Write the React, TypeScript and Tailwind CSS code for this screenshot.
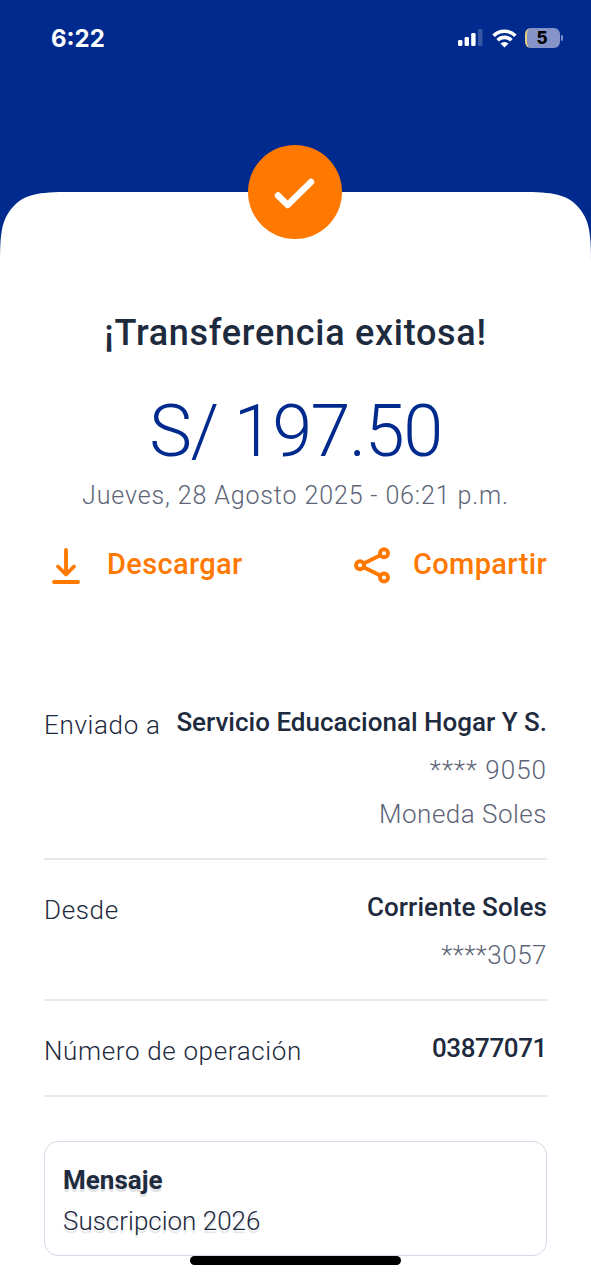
import type { ReactNode } from 'react';

interface DetailRowProps {
  label: string;
  children: ReactNode;
}

function SignalIcon() {
  return (
    <svg width="25" height="18" viewBox="0 0 25 18" fill="#fff">
      <rect x="0" y="11" width="4.4" height="6" rx="1.3" />
      <rect x="6.6" y="8" width="4.4" height="9" rx="1.3" />
      <rect x="13.2" y="4" width="4.4" height="13" rx="1.3" />
      <rect x="20" y="0" width="4.4" height="17" rx="1.3" opacity="0.22" />
    </svg>
  );
}

function WifiIcon() {
  return (
    <svg width="25" height="19" viewBox="0 0 25 19" fill="none" stroke="#fff" strokeWidth="3.6">
      <path d="M1.6 6.7a15.4 15.4 0 0 1 21.8 0" />
      <path d="M5.6 11.2a9.8 9.8 0 0 1 13.8 0" />
      <path d="M12.5 18.6 8.4 14.6a5.8 5.8 0 0 1 8.2 0z" fill="#fff" stroke="none" />
    </svg>
  );
}

function BatteryIcon() {
  return (
    <div className="flex items-center gap-px">
      <div className="flex h-5 w-[35px] items-center justify-center overflow-hidden rounded-[6px] border-l-2 border-[#e6cf7b] bg-[#8593c9] pr-[3px] font-['Inter',sans-serif] text-[17px] leading-none font-extrabold text-black">
        5
      </div>
      <div className="h-[6px] w-[2px] rounded-r-full bg-[#8593c9]" />
    </div>
  );
}

function DownloadIcon() {
  return (
    <svg className="mt-[3px]" width="28" height="36" viewBox="0 0 28 36" fill="none" stroke="#ff7800" strokeWidth="3.8" strokeLinecap="round" strokeLinejoin="round">
      <path d="M14 2v24M6 18.5l8 8 8-8M2 34h24" />
    </svg>
  );
}

function ShareIcon() {
  return (
    <svg className="mt-[3px]" width="37" height="37" viewBox="0 0 37 37" fill="none" stroke="#ff7800" strokeWidth="3.9">
      <circle cx="6" cy="18.3" r="4" />
      <circle cx="30" cy="6.3" r="4" />
      <circle cx="30" cy="30.5" r="4" />
      <path d="M9.7 16.5 26.3 8.2M9.7 20.2l16.6 8.4" />
    </svg>
  );
}

function DetailRow({ label, children }: DetailRowProps) {
  return (
    <div className="flex items-start justify-between border-b-2 border-[#e8e8ea]">
      <span className="mt-[3px] text-[26px] leading-10 font-light tracking-[0.65px] whitespace-nowrap text-[#1e2a3e]">
        {label}
      </span>
      <div className="flex flex-col items-end whitespace-nowrap">{children}</div>
    </div>
  );
}

export default function App() {
  return (
    <div className="relative h-[1280px] w-[591px] overflow-hidden bg-white font-['Roboto',sans-serif]">
      <header className="relative h-[192px] bg-[#002a8d]">
        <div className="flex items-start justify-between pt-7 pr-[28px] pl-[51px]">
          <span className="font-['Inter',sans-serif] text-[24px] leading-[21px] font-bold text-white">6:22</span>
          <div className="flex items-center gap-[8.5px]">
            <SignalIcon />
            <WifiIcon />
            <BatteryIcon />
          </div>
        </div>
        {/* Success badge, straddles the header edge */}
        <div className="absolute top-[145px] left-[248px] z-10 flex size-[94px] items-center justify-center rounded-full bg-[#ff7800] pt-[3px]">
          <svg width="42" height="34" viewBox="0 0 42 34" fill="none" stroke="#fff" strokeWidth="6.5" strokeLinecap="round" strokeLinejoin="round">
            <path d="M4 18.5 13.6 28 37 5" />
          </svg>
        </div>
      </header>

      {/* Curved top of the sheet */}
      <svg className="block bg-[#002a8d]" width="591" height="70" viewBox="0 0 591 70">
        <path fill="#fff" d="M0 70C0 40 2 28 12 16 24 2 38 0 70 0H521C553 0 567 2 579 16 589 28 591 40 591 70Z" />
      </svg>

      <main className="flex flex-col px-11 pt-[46px]">
        <h1 className="text-center text-[36px] leading-[50px] font-medium tracking-[0.72px] whitespace-nowrap text-[#1e2a3e]">
          ¡Transferencia exitosa!
        </h1>
        <p className="mt-[34px] text-center text-[72px] leading-[80px] font-[350] tracking-[-1.5px] whitespace-nowrap text-[#002a8d]">
          S/ 197.50
        </p>
        <p className="text-center text-[25px] leading-[48px] font-light tracking-[0.88px] whitespace-nowrap text-[#5c6478]">
          Jueves, 28 Agosto 2025 - 06:21 p.m.
        </p>

        <div className="mt-[24px] flex h-10 items-center justify-between text-[29px] leading-10 font-medium tracking-[0.35px] text-[#ff7800]">
          <button className="flex items-center gap-[27px] pl-2">
            <DownloadIcon />
            <span>Descargar</span>
          </button>
          <button className="flex items-center gap-[22px]">
            <ShareIcon />
            <span>Compartir</span>
          </button>
        </div>

        <section className="mt-[118px]">
          <DetailRow label="Enviado a">
            <span className="text-[26px] leading-10 font-medium text-[#1e2a3e]">Servicio Educacional Hogar Y S.</span>
            <span className="mt-2 text-[26px] leading-10 font-light tracking-[1px] text-[#5c6478]">**** 9050</span>
            <span className="mt-1 mb-[24px] text-[26px] leading-10 font-light tracking-[0.5px] text-[#5c6478]">Moneda Soles</span>
          </DetailRow>
          <div className="h-[27px]" />
          <DetailRow label="Desde">
            <span className="text-[26px] leading-10 font-medium tracking-[0.1px] text-[#1e2a3e]">Corriente Soles</span>
            <span className="mt-2 mb-[24px] text-[26px] leading-10 font-light tracking-[0.5px] text-[#5c6478]">****3057</span>
          </DetailRow>
          <div className="h-[27px]" />
          <DetailRow label="Número de operación">
            <span className="mb-[27px] text-[26px] leading-10 font-medium tracking-[-0.4px] text-[#1e2a3e]">03877071</span>
          </DetailRow>
        </section>

        <section className="mt-11 h-[115px] w-[503px] rounded-[14px] border-[1.5px] border-[#d6d9e8] pt-[18px] pl-[18px] text-[26px] text-[#1e2a3e] [text-shadow:0_3px_1px_rgba(30,42,62,0.14)]">
          <h2 className="leading-10 font-bold">Mensaje</h2>
          <p className="leading-[42px] font-light">Suscripcion 2026</p>
        </section>
      </main>

      {/* Home indicator */}
      <div className="absolute top-[1256px] left-[190px] h-[9px] w-[211px] rounded-full bg-black" />
    </div>
  );
}
